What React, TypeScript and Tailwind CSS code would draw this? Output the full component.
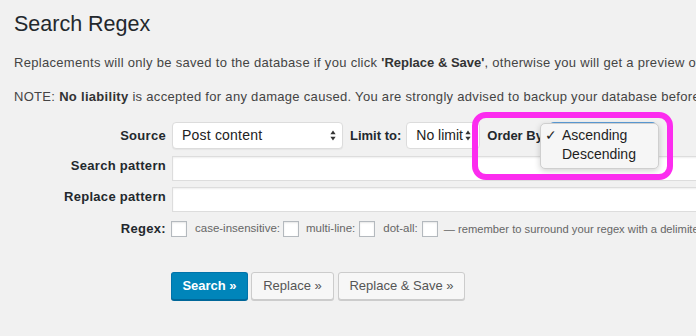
import React from "react";

function SelectArrows() {
  return (
    <svg width="6" height="11" viewBox="0 0 6 11" className="shrink-0">
      <path d="M3 0.5L5.6 4.3H0.4Z" fill="#333" />
      <path d="M3 10.5L5.6 6.7H0.4Z" fill="#333" />
    </svg>
  );
}

function Checkbox() {
  return (
    <span className="inline-block w-[16px] h-[16px] bg-white border border-[#b4b9be] shadow-[inset_0_1px_2px_rgba(0,0,0,0.1)] shrink-0" />
  );
}

export default function App() {
  return (
    <div className="relative w-[696px] h-[336px] overflow-hidden bg-[#f1f1f1] text-[#444] font-['Liberation_Sans',Arial,sans-serif]">
      {/* Header */}
      <div className="pl-[14px] pt-[10px] whitespace-nowrap">
        <h1 className="text-[21.5px] leading-[28px] text-[#23282d]">
          Search Regex
        </h1>
        <p className="mt-[15px] text-[13px] leading-[20px] tracking-[0.3px]">
          Replacements will only be saved to the database if you click{" "}
          <b className="text-[#333] tracking-normal">'Replace &amp; Save'</b>,
          otherwise you will get a preview of the results.
        </p>
        <p className="mt-[14px] text-[13px] leading-[20px] tracking-[0.3px]">
          NOTE: <b className="text-[#333]">No liability</b> is accepted for any
          damage caused. You are strongly advised to backup your database before
          making any changes.
        </p>
      </div>

      {/* Form */}
      <div className="mt-[15px] whitespace-nowrap">
        {/* Source row */}
        <div className="flex items-center h-[27px]">
          <div className="shrink-0 w-[166px] text-right text-[13px] tracking-[0.3px] font-bold text-[#23282d]">
            Source
          </div>
          <div className="shrink-0 ml-[6px] w-[171px] h-[27px] flex items-center justify-between pl-[9px] pr-[6px] bg-white border border-[#dcdcdc] rounded-[4px] shadow-[0_1px_1px_rgba(0,0,0,0.05)] text-[14px] tracking-[0.2px] text-[#222]">
            Post content
            <SelectArrows />
          </div>
          <div className="shrink-0 ml-[7px] text-[13px] font-bold text-[#23282d]">
            Limit to:
          </div>
          <div className="shrink-0 ml-[5px] w-[74px] h-[27px] flex items-center justify-between pl-[9px] pr-[8px] bg-white border border-[#dcdcdc] rounded-[4px] text-[14px] text-[#222]">
            No limit
            <SelectArrows />
          </div>
          <div className="shrink-0 ml-[7px] text-[13px] font-bold text-[#23282d]">
            Order By
          </div>
          <div className="shrink-0 ml-[7px] w-[106px] h-[27px] bg-white border-2 border-[#5b9dd9] rounded-[4px]" />
        </div>

        {/* Search pattern */}
        <div className="flex items-start mt-[7px]">
          <div className="shrink-0 w-[166px] pt-[1px] text-right text-[13px] leading-[18px] tracking-[0.3px] font-bold text-[#23282d]">
            Search pattern
          </div>
          <div className="shrink-0 ml-[6px] w-[560px] h-[25px] bg-white border border-[#ddd] shadow-[inset_0_1px_2px_rgba(0,0,0,0.07)]" />
        </div>

        {/* Replace pattern */}
        <div className="flex items-start mt-[6px]">
          <div className="shrink-0 w-[166px] pt-[1px] text-right text-[13px] leading-[18px] tracking-[0.3px] font-bold text-[#23282d]">
            Replace pattern
          </div>
          <div className="shrink-0 ml-[6px] w-[560px] h-[25px] bg-white border border-[#ddd] shadow-[inset_0_1px_2px_rgba(0,0,0,0.07)]" />
        </div>

        {/* Regex flags */}
        <div className="flex items-center mt-[9px] h-[16px] text-[11.5px] text-[#666]">
          <div className="shrink-0 w-[166px] text-right text-[13px] tracking-[0.3px] font-bold text-[#23282d]">
            Regex:
          </div>
          <span className="shrink-0 ml-[5px] flex">
            <Checkbox />
          </span>
          <span className="shrink-0 ml-[8px]">case-insensitive:</span>
          <span className="shrink-0 ml-[3px] flex">
            <Checkbox />
          </span>
          <span className="shrink-0 ml-[7px]">multi-line:</span>
          <span className="shrink-0 ml-[4px] flex">
            <Checkbox />
          </span>
          <span className="shrink-0 ml-[8px]">dot-all:</span>
          <span className="shrink-0 ml-[4px] flex">
            <Checkbox />
          </span>
          <span className="shrink-0 ml-[6px] text-[11.2px]">
            — remember to surround your regex with a delimiter!
          </span>
        </div>

        {/* Buttons */}
        <div className="flex items-start ml-[171px] mt-[35px] gap-[3px]">
          <button className="shrink-0 w-[77px] h-[28px] rounded-[3px] bg-[#0085ba] border border-[#0073aa] border-b-[#006799] shadow-[0_1px_0_#006799] text-white text-[13px] font-bold">
            Search »
          </button>
          <button className="shrink-0 w-[83px] h-[28px] rounded-[3px] bg-[#f7f7f7] border border-[#ccc] shadow-[0_1px_0_#ccc] text-[#555] text-[13px]">
            Replace »
          </button>
          <button className="shrink-0 ml-[1px] w-[127px] h-[28px] rounded-[3px] bg-[#f7f7f7] border border-[#ccc] shadow-[0_1px_0_#ccc] text-[#555] text-[13px]">
            Replace &amp; Save »
          </button>
        </div>
      </div>

      {/* Open dropdown menu */}
      <div className="absolute left-[540px] top-[123px] w-[119px] h-[46px] pt-[2px] bg-[#f6f6f6] border border-[#cfcfcf] rounded-[5px] shadow-[0_2px_6px_rgba(0,0,0,0.18)] text-[14px] leading-[19px] text-[#1e1e1e]">
        <div className="flex items-center">
          <span className="w-[21px] pl-[4px] text-[14px]">✓</span>
          <span>Ascending</span>
        </div>
        <div className="flex items-center">
          <span className="w-[21px]" />
          <span>Descending</span>
        </div>
      </div>

      {/* Highlight annotation */}
      <div className="absolute left-[472px] top-[112px] w-[201px] h-[68px] border-[6px] border-[#fc2cef] rounded-[14px]" />
    </div>
  );
}
